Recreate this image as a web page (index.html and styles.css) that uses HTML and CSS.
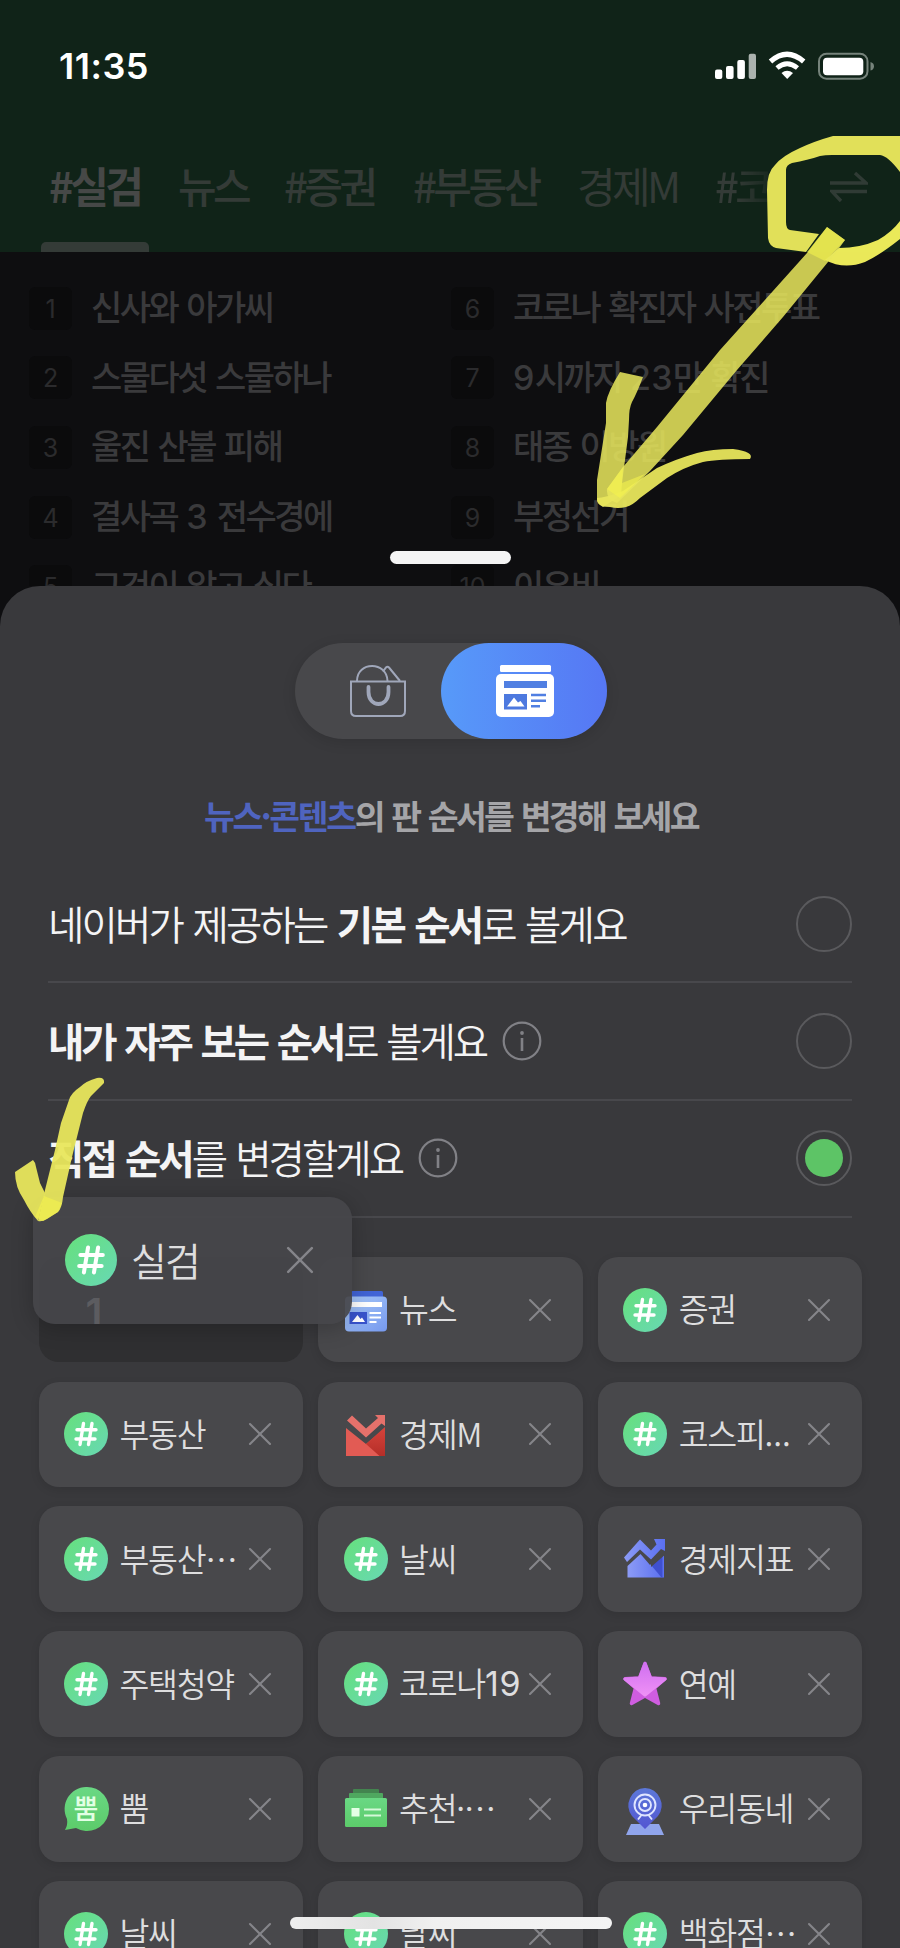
FILE: index.html
```html
<!DOCTYPE html>
<html lang="ko">
<head>
<meta charset="utf-8">
<title>판 순서 변경</title>
<link rel="stylesheet" href="styles.css">
</head>
<body>
<svg class="defs" width="0" height="0" aria-hidden="true">
  <defs>
    <linearGradient id="gHash" x1="0" y1="0" x2="1" y2="1"><stop offset="0" stop-color="#66e07c"/><stop offset="1" stop-color="#68d8b4"/></linearGradient>
    <linearGradient id="gNews" x1="0" y1="0" x2="1" y2="1"><stop offset="0" stop-color="#a9caf8"/><stop offset="1" stop-color="#7699ee"/></linearGradient>
    <linearGradient id="gTrend" x1="0" y1="0" x2="1" y2="0"><stop offset="0" stop-color="#8c9bf6"/><stop offset="1" stop-color="#5a6ff0"/></linearGradient>
    <linearGradient id="gStar" x1="0" y1="0" x2="0" y2="1"><stop offset="0" stop-color="#d070f0"/><stop offset="1" stop-color="#ee90f6"/></linearGradient>
    <linearGradient id="gRed" x1="0" y1="0" x2="0" y2="1"><stop offset="0" stop-color="#d6443c"/><stop offset="1" stop-color="#b52e28"/></linearGradient>
    <linearGradient id="gGreen" x1="0" y1="0" x2="0" y2="1"><stop offset="0" stop-color="#6ad884"/><stop offset="1" stop-color="#5ccb6a"/></linearGradient>
    <linearGradient id="gPin" x1="0" y1="0" x2="0" y2="1"><stop offset="0" stop-color="#5c78d8"/><stop offset="1" stop-color="#5356d2"/></linearGradient>
  </defs>
  <symbol id="hash" viewBox="0 0 44 44">
    <circle cx="22" cy="22" r="22" fill="url(#gHash)"/>
    <path d="M19.5 11.5 L16 32.5 M28 11.5 L24.5 32.5 M13 17.8 H32 M12 27 H31" fill="none" stroke="#fff" stroke-width="3.4" stroke-linecap="round"/>
  </symbol>
  <symbol id="news" viewBox="0 0 44 44">
    <rect x="7" y="3" width="32" height="12" rx="1.5" fill="#4164d6"/>
    <rect x="1" y="8.500" width="42" height="35" rx="4" fill="url(#gNews)"/>
    <rect x="6" y="14" width="32" height="5" fill="#fff"/>
    <rect x="5.500" y="24" width="17.500" height="12" fill="#3853cc"/>
    <path d="M8 34 L13.500 27 L16.500 31 L18 29.500 L21 34 Z" fill="#fff"/>
    <path d="M25.500 25 H37 M25.500 29.500 H37 M25.500 34 H32.500" stroke="#fff" stroke-width="1.900"/>
  </symbol>
  <symbol id="econ" viewBox="0 0 44 44">
    <path d="M2 16 L22 32 L41 16 V44 H2 Z" fill="#e25b54"/>
    <path d="M22 32 L41 15 V44 H35.500 Z" fill="url(#gRed)"/>
    <path d="M3 8.500 L8 3.500 L22 16.500 L34 6 L31 3 H41 V14 L37.500 11.500 L22 25.500 Z" fill="#e5716b"/>
  </symbol>
  <symbol id="trend" viewBox="0 0 44 44">
    <path d="M4.500 29 L17.500 17 L27 28 L41 14 V40.500 H4.500 Z" fill="url(#gTrend)"/>
    <path d="M28 28 L39.500 17 V40.500 H38.500 Z" fill="#3f50cf"/>
    <path d="M28 25 L40 13 L44 16 L28 30 Z" fill="#48484b"/>
    <path d="M1 20.500 L17 2.500 L28 13.500 L33.500 7.500 L31 2 H42 V14 L38 12 L28 22.500 L17 12.500 L4 25 Z" fill="url(#gTrend)"/>
  </symbol>
  <symbol id="star" viewBox="0 0 44 44">
    <path d="M22 1.500 L27.500 16 L42 16.800 L31.500 26 L35.500 41.500 L22 34 L8.500 41.500 L12.500 26 L2 16.800 L16.500 16 Z" fill="#cf5de0" stroke="#cf5de0" stroke-width="3.500" stroke-linejoin="round"/>
    <path d="M22 1.500 L27.500 16 L42 17 L22 33 L2 17 L16.500 16 Z" fill="url(#gStar)" stroke="url(#gStar)" stroke-width="3.200" stroke-linejoin="round"/>
  </symbol>
  <symbol id="bubble" viewBox="0 0 44 44">
    <path d="M22 0 A22 22 0 1 1 12 41 L1 43 Q4 38 3 32 A22 22 0 0 1 22 0Z" fill="url(#gGreen)"/>
  </symbol>
  <symbol id="stack" viewBox="0 0 44 44">
    <rect x="9" y="2" width="26" height="8" rx="1" fill="#43844f"/>
    <rect x="5" y="6" width="34" height="8" rx="1" fill="#4fa75f"/>
    <rect x="1" y="11" width="42" height="29" rx="1.500" fill="url(#gGreen)"/>
    <rect x="7.500" y="21" width="8" height="8.500" fill="#e4ffe6"/>
    <path d="M20 22.500 H37 M20 28.500 H37" stroke="#d4f8d8" stroke-width="2.200"/>
  </symbol>
  <symbol id="pin" viewBox="0 0 44 44">
    <path d="M8 37 H36 L41 48 H3 Z" fill="#90a5ec"/>
    <path d="M22 1 A17.500 17.500 0 0 1 35 29 L22 42 L9 29 A17.500 17.500 0 0 1 22 1Z" fill="url(#gPin)"/>
    <g fill="none" stroke="#dfe5ff" stroke-width="1.900"><circle cx="22" cy="18" r="10.500"/><circle cx="22" cy="18" r="6"/><path d="M18.500 28 L15 32.500 M25.500 28 L29 32.500"/></g>
    <circle cx="22" cy="18" r="2.300" fill="#fff"/>
  </symbol>
  <symbol id="x" viewBox="0 0 22 22"><path d="M1 1 L21 21 M21 1 L1 21" stroke="#85858a" stroke-width="2.100" stroke-linecap="round"/></symbol>
  <symbol id="info" viewBox="0 0 40 40"><circle cx="20" cy="20" r="18.300" fill="none" stroke="#818186" stroke-width="2.200"/><circle cx="20" cy="12" r="1.900" fill="#818186"/><path d="M20 17 V30" stroke="#818186" stroke-width="2.600"/></symbol>
</svg>

<div class="screen">
  <header class="top">
    <div class="status">
      <span class="clock">11:35</span>
      <svg class="sys" width="162" height="30" viewBox="0 0 162 30">
        <g fill="#fff"><rect x="1" y="18.500" width="7.300" height="9.500" rx="2"/><rect x="12" y="15" width="7.600" height="13" rx="2"/><rect x="23.300" y="9" width="7.600" height="19" rx="2"/><rect x="34.700" y="2.700" width="7.300" height="25.300" rx="2" opacity=".65"/></g>
        <g fill="none" stroke="#fff"><path d="M56.500 10.500 Q73 -4 89.700 10.500" stroke-width="5.200"/><path d="M63 17 Q73 8.500 83.500 17" stroke-width="4.800"/></g>
        <path d="M67.500 22 Q73 17.500 79 22 L73.200 28 Z" fill="#fff"/>
        <rect x="105" y="2.700" width="48.500" height="25" rx="7.500" fill="none" stroke="#76837b" stroke-width="2"/>
        <rect x="109" y="6.700" width="40.300" height="17.600" rx="4" fill="#fff"/>
        <path d="M156.500 11 Q160 12 160 15.200 Q160 18.500 156.500 19.500 Z" fill="#76837b"/>
      </svg>
    </div>
    <nav class="tabs">
      <span class="tab on">#실검</span><span class="tab t2">뉴스</span><span class="tab t3">#증권</span><span class="tab t4">#부동산</span><span class="tab t5">경제M</span><span class="tab t6">#코</span>
      <svg class="swap" width="38" height="32" viewBox="0 0 38 32" fill="none" stroke="#303b35" stroke-width="3.400"><path d="M0 12 H36 L25 2 M37 20.500 H2 L11 30"/></svg>
    </nav>
  </header>

  <section class="ranks">
    <ol class="col">
      <li><i>1</i><b>신사와 아가씨</b></li><li><i>2</i><b>스물다섯 스물하나</b></li><li><i>3</i><b>울진 산불 피해</b></li><li><i>4</i><b>결사곡 <span class="digit">3</span> 전수경에</b></li><li><i>5</i><b>그것이 알고 싶다</b></li>
    </ol>
    <ol class="col">
      <li><i>6</i><b>코로나 확진자 사전투표</b></li><li><i>7</i><b><span class="digit">9</span>시까지 <span class="digit">23</span>만 확진</b></li><li><i>8</i><b>태종 이방원</b></li><li><i>9</i><b>부정선거</b></li><li><i>10</i><b>이유비</b></li>
    </ol>
    <div class="grabber"></div>
  </section>

  <main class="sheet">
    <div class="toggle">
      <div class="side">
        <svg width="58" height="54" viewBox="0 0 58 54" fill="none" stroke="#a0a7ba" stroke-width="2"><path d="M2 17.500 H56 V47 Q56 52 51 52 H7 Q2 52 2 47 Z"/><path d="M8 17 C8 -3 38 -3 38.500 17"/><path d="M34 7.500 L37 3.500 Q38.500 2 40 3.500 L51 17"/><path d="M19.500 23 V28 C19.500 44 39.500 44 39.500 28 V23" stroke-width="3.800" stroke-linecap="round"/></svg>
      </div>
      <div class="side active">
        <svg width="60" height="54" viewBox="0 0 60 54"><rect x="5" y="1" width="51" height="7" rx="1.500" fill="#fff"/><rect x="1" y="10" width="58" height="43" rx="5" fill="#fff"/><rect x="9" y="17" width="43" height="7" fill="#507fe2"/><rect x="9" y="30" width="23" height="15.500" fill="#4d79df"/><path d="M12 42.500 L19 33.500 L23 38.500 L25.500 37 L29.500 42.500 Z" fill="#fff"/><path d="M36 31 H51 M36 36.700 H51 M36 42.300 H45" stroke="#507fe2" stroke-width="2.400"/></svg>
      </div>
    </div>
    <p class="hint"><em>뉴스·콘텐츠</em>의 판 순서를 변경해 보세요</p>

    <ul class="options">
      <li><span class="label">네이버가 제공하는 <b>기본 순서</b>로 볼게요</span><span class="radio"></span></li>
      <li><span class="label l2"><b>내가 자주 보는 순서</b>로 볼게요</span><svg class="info"><use href="#info"/></svg><span class="radio"></span></li>
      <li><span class="label l3"><b>직접 순서</b>를 변경할게요</span><svg class="info"><use href="#info"/></svg><span class="radio checked"></span></li>
    </ul>

    <div class="grid">
      <div class="slot"><span>1</span>
        <div class="tile lifted"><svg class="ic"><use href="#hash"/></svg><span class="name">실검</span><svg class="x"><use href="#x"/></svg></div>
      </div>
      <div class="tile"><svg class="ic"><use href="#news"/></svg><span class="name">뉴스</span><svg class="x"><use href="#x"/></svg></div>
      <div class="tile"><svg class="ic"><use href="#hash"/></svg><span class="name">증권</span><svg class="x"><use href="#x"/></svg></div>
      <div class="tile"><svg class="ic"><use href="#hash"/></svg><span class="name">부동산</span><svg class="x"><use href="#x"/></svg></div>
      <div class="tile"><svg class="ic"><use href="#econ"/></svg><span class="name">경제M</span><svg class="x"><use href="#x"/></svg></div>
      <div class="tile"><svg class="ic"><use href="#hash"/></svg><span class="name">코스피<span class="dots">...</span></span><svg class="x"><use href="#x"/></svg></div>
      <div class="tile"><svg class="ic"><use href="#hash"/></svg><span class="name">부동산⋯</span><svg class="x"><use href="#x"/></svg></div>
      <div class="tile"><svg class="ic"><use href="#hash"/></svg><span class="name">날씨</span><svg class="x"><use href="#x"/></svg></div>
      <div class="tile"><svg class="ic"><use href="#trend"/></svg><span class="name">경제지표</span><svg class="x"><use href="#x"/></svg></div>
      <div class="tile"><svg class="ic"><use href="#hash"/></svg><span class="name">주택청약</span><svg class="x"><use href="#x"/></svg></div>
      <div class="tile"><svg class="ic"><use href="#hash"/></svg><span class="name">코로나<span class="num">19</span></span><svg class="x"><use href="#x"/></svg></div>
      <div class="tile"><svg class="ic"><use href="#star"/></svg><span class="name">연예</span><svg class="x"><use href="#x"/></svg></div>
      <div class="tile"><span class="ic badge"><svg class="ic"><use href="#bubble"/></svg><span class="badge-text">뿜</span></span><span class="name">뿜</span><svg class="x"><use href="#x"/></svg></div>
      <div class="tile"><svg class="ic"><use href="#stack"/></svg><span class="name">추천·⋯</span><svg class="x"><use href="#x"/></svg></div>
      <div class="tile"><svg class="ic"><use href="#pin"/></svg><span class="name">우리동네</span><svg class="x"><use href="#x"/></svg></div>
      <div class="tile"><svg class="ic"><use href="#hash"/></svg><span class="name">날씨</span><svg class="x"><use href="#x"/></svg></div>
      <div class="tile"><svg class="ic"><use href="#hash"/></svg><span class="name">날씨</span><svg class="x"><use href="#x"/></svg></div>
      <div class="tile"><svg class="ic"><use href="#hash"/></svg><span class="name">백화점⋯</span><svg class="x"><use href="#x"/></svg></div>
    </div>
  </main>
  <div class="home-bar"></div>

  <!-- Highlighter marks drawn over the screen -->
  <svg class="marks" width="900" height="1948" viewBox="0 0 900 1948">
    <g fill="#e8e65c">
      <path fill-opacity=".97" d="M900 136 H833 Q815 141 800 148 Q782 156 775 165 Q767 172 767 190 L768 238 Q769 246 776 248 L806 252 L819 234 L790 230 Q786 229 786 222 V170 Q786 165 792 163 Q808 160 820 156 Q825 155 832 155 H880 Q888 156 900 172 Z"/>
      <path fill="#f2f05c" fill-opacity=".97" d="M900 221 Q892 232 878 240 Q860 248 839 248 L825 260 Q844 270 865 262 Q880 255 900 239 Z"/>
      <path fill-opacity=".86" d="M827 227 L845 240 L837 251 L783 317 L737 370 L683 435 L650 471 L617 503 Q606 499 607 489 L623 467 L657 427 L720 350 L807 253 Z"/>
      <path fill-opacity=".86" d="M620 372 L643 377 Q637 393 632 402 Q629 408 629 420 L628 437 L622 483 L621 495 L603 507 Q597 504 597 498 L597 480 L606 423 V403 Q608 391 620 372Z"/>
      <path fill-opacity=".95" d="M597 498 Q596 507 610 507 Q618 509 626 507 Q633 505 640 498 L667 478 Q684 467 703 462 Q718 459 750 459 Q755 452 733 449 Q712 449 697 453 Q676 459 657 468 L623 491 Q605 498 597 498Z"/>
      <path fill="#f5f44d" fill-opacity=".6" d="M827 227 L845 240 L825 261 L807 252Z M607 489 L623 467 L622 483 L645 474 L620 498 Z"/>
      <path fill-opacity=".95" d="M15 1172 L33 1160 Q36 1163 36 1167 L40 1183 L45 1193 L38 1221 Q30 1212 24 1200 Q15 1187 15 1172Z"/>
      <path fill-opacity=".95" d="M38 1221 Q42 1222 47 1219 L58 1212 Q62 1208 63 1197 L72 1157 L83 1113 Q87 1101 91 1096 L104 1083 Q105 1077 97 1078 Q86 1081 80 1087 Q71 1093 69 1100 L61 1123 L55 1150 L45 1190Z"/>
      <path fill="#f5f44d" fill-opacity=".6" d="M44 1196 L62 1203 L58 1212 L43 1221 L35 1217Z"/>
    </g>
  </svg>
</div>
</body>
</html>
```
FILE: styles.css
```css
* { box-sizing: border-box; }
body { margin: 0; background: #0e0e10; font-family: "Liberation Sans", "Noto Sans CJK KR", sans-serif; }
ol, ul, p { margin: 0; padding: 0; list-style: none; }
symbol { overflow: visible; }
.defs { position: absolute; }
.screen { position: relative; width: 900px; height: 1948px; overflow: hidden; display: flex; flex-direction: column; font-family: "Noto Sans CJK KR", sans-serif; white-space: nowrap; }

.top { flex: none; height: 252px; background: #102318; display: flex; flex-direction: column; justify-content: space-between; }
.status { display: flex; justify-content: space-between; padding: 48px 24px 0 59px; height: 100px; }
.clock { font: 600 36px/36px Inter, sans-serif; color: #fff; letter-spacing: .5px; }
.sys { margin-top: 3px; }
.tabs { display: flex; height: 98px; padding-left: 41px; color: #343b37; font-size: 42px; line-height: 62px; letter-spacing: -3.6px; }
.tab { width: 106px; flex: none; font-weight: 500; }
.tab.on { position: relative; width: 108px; padding-left: 8px; margin-right: 29px; font-weight: 700; color: #464847; }
.tab.on::after { content: ""; position: absolute; left: 0; bottom: 0; width: 108px; height: 10px; background: #343b37; border-radius: 5px 5px 0 0; }
.tab.t3 { width: 129px; }
.tab.t4 { width: 164px; }
.tab.t5 { width: 138px; font-weight: 400; }
.tab.t6 { width: 67px; overflow: hidden; -webkit-mask-image: linear-gradient(90deg, #000 30%, transparent); mask-image: linear-gradient(90deg, #000 30%, transparent); }
.swap { margin: 17px 0 0 48px; }

.ranks { position: relative; flex: none; height: 334px; overflow: hidden; display: flex; padding: 21.500px 0 0 29px; color: #3a3a3c; }
.col { width: 422px; flex: none; }
.col li { display: flex; align-items: center; height: 69.600px; gap: 19px; }
.col i { flex: none; width: 43px; height: 43px; border-radius: 6px; background: #0b0b0c; text-align: center; font: 400 25px/44px Inter, sans-serif; color: #2b2b2d; }
.col b { font-weight: 500; font-size: 34px; line-height: 40px; letter-spacing: -2.500px; font-family: Inter, "Noto Sans CJK KR", sans-serif; word-spacing: 2.300px; }
.col .digit { letter-spacing: .3px; }
.grabber { position: absolute; left: 390px; top: 299px; width: 121px; height: 13px; border-radius: 7px; background: #f4f4f4; }

.sheet { flex: none; height: 1362px; overflow: hidden; background: #39393c; border-radius: 40px 40px 0 0; display: flex; flex-direction: column; }
.toggle { flex: none; display: flex; align-self: center; width: 312px; height: 96px; margin: 57px 0 0 2px; border-radius: 48px; background: #48484b; box-shadow: 0 3px 14px rgba(0,0,0,.12); }
.side { width: 146px; display: flex; align-items: center; justify-content: center; padding-left: 20px; }
.side.active { width: 166px; padding: 0 0 0 2px; border-radius: 48px; background: linear-gradient(90deg, #579af9, #5677f4); }
.hint { flex: none; margin: 51px 0 0 204px; font-size: 33.500px; line-height: 50px; font-weight: 700; color: #a5a5a8; letter-spacing: -2.700px; word-spacing: 1.800px; }
.hint em { font-style: normal; color: #4f64bf; letter-spacing: -2.400px; }
.options { flex: none; margin: 26px 48px 0; }
.options li { height: 117.300px; display: flex; align-items: center; border-bottom: 2px solid #48484c; }
.label { margin-top: -2px; font-size: 39.500px; line-height: 58px; font-weight: 350; color: #f4f4f5; letter-spacing: -2.800px; word-spacing: 2px; }
.label.l2 { letter-spacing: -3.150px; }
.label.l3 { letter-spacing: -2.950px; }
.label b { font-weight: 700; }
.info { width: 40px; height: 40px; margin-left: 16px; }
.radio { margin-left: auto; width: 56px; height: 56px; border: 2px solid #5a5a5d; border-radius: 50%; padding: 7px; }
.radio.checked::after { content: ""; display: block; width: 38px; height: 38px; border-radius: 50%; background: #5dc466; }

.grid { flex: none; display: grid; grid-template-columns: repeat(3, 264.600px); grid-auto-rows: 105.500px; gap: 19.300px 15px; margin: 39px 0 0 38.500px; }
.tile { display: flex; align-items: center; padding: 0 32px 0 25.500px; border-radius: 20px; background: #48484b; box-shadow: 0 3px 10px rgba(0,0,0,.1); }
.ic { flex: none; width: 44px; height: 44px; overflow: visible; }
.name { margin: -3px 0 0 11.500px; font-size: 32.500px; line-height: 48px; font-weight: 350; color: #dededf; letter-spacing: -1.300px; }
.num { font-family: Inter, sans-serif; font-size: 34px; font-weight: 400; letter-spacing: .8px; }
.x { flex: none; width: 22px; height: 22px; margin-left: auto; overflow: visible; }
.dots { letter-spacing: 0; }
.badge { position: relative; }
.badge-text { position: absolute; inset: 0; font-size: 27px; line-height: 42px; text-align: center; font-weight: 500; color: #e2ffe4; }
.slot { position: relative; border-radius: 20px; background: #2f2f31; }
.slot > span { position: absolute; left: 47px; top: 32px; font: 600 40px/48px Inter, sans-serif; color: #5c5c60; z-index: 3; clip-path: inset(0 0 13px 0); }
.lifted { position: absolute; left: -5.500px; top: -60px; width: 319px; height: 127px; padding: 0 39px 0 32px; border-radius: 22px; background: rgba(70,70,74,.93); box-shadow: 0 4px 22px rgba(0,0,0,.22); z-index: 2; }
.lifted .ic { width: 52px; height: 52px; }
.lifted .name { margin-left: 14px; font-size: 39px; line-height: 56px; letter-spacing: -2px; }
.lifted .x { width: 26px; height: 26px; }

.home-bar { position: absolute; z-index: 4; left: 290px; top: 1917px; width: 322px; height: 12px; border-radius: 6px; background: linear-gradient(90deg, #eee, #e3e3e3 26%, #f0f0f0 45%, #f4f4f4); }
.marks { position: absolute; z-index: 5; left: 0; top: 0; }
```
